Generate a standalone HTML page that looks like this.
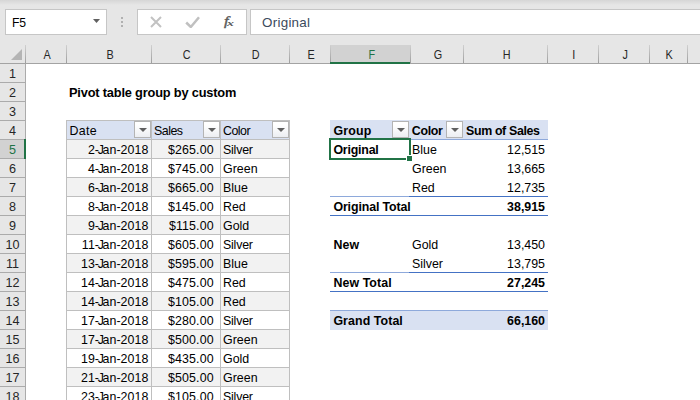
<!DOCTYPE html>
<html lang="en"><head><meta charset="utf-8"><title>Pivot table group by custom</title>
<style>
html,body{margin:0;padding:0}
body{width:700px;height:400px;overflow:hidden;background:#fff;position:relative;font-family:"Liberation Sans",Arial,sans-serif;font-size:12.4px;color:#000}
div,span{position:absolute;box-sizing:border-box;white-space:nowrap}
.top{left:0;top:0;width:700px;height:64px;background:#e6e6e6}
.grad{left:0;top:0;width:700px;height:5px;background:linear-gradient(#d6d6d6,#e6e6e6)}
.box{top:9px;height:26px;background:#fff;border:1px solid #c6c6c6}
.ch{top:46px;height:18px;line-height:19px;text-align:center;color:#262626;font-size:12.6px}
.ch b{font-weight:normal;display:inline-block;transform:scaleX(0.86)}
.sep{top:45px;width:1px;height:18px;background:linear-gradient(#d0d0d0,#9e9e9e)}
.rh{left:0;width:25px;height:18px;line-height:21px;text-align:center;color:#262626;font-size:12.6px;background:#e6e6e6}
.rl{left:0;width:25px;height:1px;background:#ababab}
.c{height:19px;line-height:19px;margin-top:0.5px}
.r{text-align:right}
.j{font-style:normal;position:static;letter-spacing:-1.3px}
.d{letter-spacing:0.05px}
.m{letter-spacing:0.15px}
.b{font-weight:bold}
.fb{width:17px;height:17px;border:1px solid #b4b4b4;background:linear-gradient(#fff 20%,#eceef2)}
.fb i{position:absolute;left:3.5px;top:6px;width:0;height:0;border-left:4px solid transparent;border-right:4px solid transparent;border-top:4px solid #606060}
</style></head><body>

<div class="top"></div><div class="grad"></div>
<div class="box" style="left:5px;width:102px"></div>
<span style="left:12px;top:9px;height:26px;line-height:28px;font-size:12.2px;letter-spacing:-0.3px;color:#000">F5</span>
<svg style="position:absolute;left:93px;top:19px" width="8" height="5"><polygon points="0,0 7,0 3.5,4" fill="#606060"/></svg>
<div style="left:121px;top:17px;width:2px;height:2px;background:#b0b0b0"></div>
<div style="left:121px;top:21px;width:2px;height:2px;background:#b0b0b0"></div>
<div style="left:121px;top:25px;width:2px;height:2px;background:#b0b0b0"></div>
<div class="box" style="left:137px;width:110px"></div>
<svg style="position:absolute;left:150px;top:16px" width="12" height="12"><path d="M1 1 L11 11 M11 1 L1 11" stroke="#c2c2c2" stroke-width="2" fill="none"/></svg>
<svg style="position:absolute;left:185px;top:16px" width="15" height="12"><path d="M1.2 6.5 L5.8 11 L14 1.2" stroke="#c0c0c0" stroke-width="2.5" fill="none"/></svg>
<span style="left:224.2px;top:9px;height:26px;line-height:25px;font-family:'Liberation Serif',serif;font-style:italic;font-size:12.8px;color:#5a5a5a"><i style="display:inline-block;transform:scaleX(1.3);transform-origin:0 50%;-webkit-text-stroke:0.35px #5a5a5a">f</i><span style="position:relative;display:inline-block;font-size:9.2px;font-weight:bold;top:0.7px;left:-0.3px;transform:scaleX(1.5);transform-origin:0 50%">x</span></span>
<div class="box" style="left:250px;width:460px"></div>
<span style="left:262px;top:9px;height:26px;line-height:28px;font-size:13.4px;letter-spacing:0.27px;color:#3b4a5c">Original</span>
<div style="left:0;top:63px;width:700px;height:1px;background:#a3a3a3"></div>
<svg style="position:absolute;left:11px;top:49px" width="11" height="11"><polygon points="0,11 11,11 11,0" fill="#b4b4b4"/></svg>
<div class="sep" style="left:25px"></div>
<div class="ch" style="left:27px;width:40px"><b>A</b></div>
<div class="sep" style="left:66px"></div>
<div class="ch" style="left:68px;width:84px"><b>B</b></div>
<div class="sep" style="left:151px"></div>
<div class="ch" style="left:153px;width:68px"><b>C</b></div>
<div class="sep" style="left:220px"></div>
<div class="ch" style="left:222px;width:68px"><b>D</b></div>
<div class="sep" style="left:289px"></div>
<div class="ch" style="left:291px;width:40px"><b>E</b></div>
<div class="sep" style="left:330px"></div>
<div style="left:331px;top:45px;width:79px;height:17px;background:#d2d2d2"></div>
<div class="ch" style="left:332px;width:79px;color:#217346"><b>F</b></div>
<div class="sep" style="left:410px"></div>
<div class="ch" style="left:412px;width:52px"><b>G</b></div>
<div class="sep" style="left:463px"></div>
<div class="ch" style="left:465px;width:83px"><b>H</b></div>
<div class="sep" style="left:547px"></div>
<div class="ch" style="left:549px;width:50px"><b>I</b></div>
<div class="sep" style="left:598px"></div>
<div class="ch" style="left:600px;width:50px"><b>J</b></div>
<div class="sep" style="left:649px"></div>
<div class="ch" style="left:651px;width:37px"><b>K</b></div>
<div class="sep" style="left:687px"></div>
<div class="ch" style="left:689px;width:32px"><b>L</b></div>
<div style="left:0;top:64px;width:25px;height:336px;background:#e6e6e6"></div>
<div style="left:25px;top:64px;width:1px;height:336px;background:#ababab"></div>
<div class="rh" style="top:64px">1</div>
<div class="rl" style="top:82px"></div>
<div class="rh" style="top:83px">2</div>
<div class="rl" style="top:101px"></div>
<div class="rh" style="top:102px">3</div>
<div class="rl" style="top:120px"></div>
<div class="rh" style="top:121px">4</div>
<div class="rl" style="top:139px"></div>
<div style="left:0;top:140px;width:24px;height:18px;background:#d2d2d2"></div>
<div class="rh" style="top:140px;background:none;color:#217346">5</div>
<div class="rl" style="top:158px"></div>
<div class="rh" style="top:159px">6</div>
<div class="rl" style="top:177px"></div>
<div class="rh" style="top:178px">7</div>
<div class="rl" style="top:196px"></div>
<div class="rh" style="top:197px">8</div>
<div class="rl" style="top:215px"></div>
<div class="rh" style="top:216px">9</div>
<div class="rl" style="top:234px"></div>
<div class="rh" style="top:235px">10</div>
<div class="rl" style="top:253px"></div>
<div class="rh" style="top:254px">11</div>
<div class="rl" style="top:272px"></div>
<div class="rh" style="top:273px">12</div>
<div class="rl" style="top:291px"></div>
<div class="rh" style="top:292px">13</div>
<div class="rl" style="top:310px"></div>
<div class="rh" style="top:311px">14</div>
<div class="rl" style="top:329px"></div>
<div class="rh" style="top:330px">15</div>
<div class="rl" style="top:348px"></div>
<div class="rh" style="top:349px">16</div>
<div class="rl" style="top:367px"></div>
<div class="rh" style="top:368px">17</div>
<div class="rl" style="top:386px"></div>
<div class="rh" style="top:387px">18</div>
<div class="rl" style="top:405px"></div>
<div style="left:330px;top:62px;width:80px;height:2px;background:#217346"></div>
<div style="left:24px;top:139px;width:2px;height:20px;background:#217346"></div>
<span class="c b" style="left:69px;top:83px;font-size:12.8px;letter-spacing:-0.18px;margin-top:0">Pivot table group by custom</span>
<div style="left:66px;top:120px;width:224px;height:20px;background:#d9e1f2"></div>
<div style="left:66px;top:139px;width:224px;height:20px;background:#f2f2f2"></div>
<div style="left:66px;top:177px;width:224px;height:20px;background:#f2f2f2"></div>
<div style="left:66px;top:215px;width:224px;height:20px;background:#f2f2f2"></div>
<div style="left:66px;top:253px;width:224px;height:20px;background:#f2f2f2"></div>
<div style="left:66px;top:291px;width:224px;height:20px;background:#f2f2f2"></div>
<div style="left:66px;top:329px;width:224px;height:20px;background:#f2f2f2"></div>
<div style="left:66px;top:367px;width:224px;height:20px;background:#f2f2f2"></div>
<div style="left:66px;top:120px;width:224px;height:1px;background:#bfbfbf"></div>
<div style="left:66px;top:139px;width:224px;height:1px;background:#bfbfbf"></div>
<div style="left:66px;top:158px;width:224px;height:1px;background:#bfbfbf"></div>
<div style="left:66px;top:177px;width:224px;height:1px;background:#bfbfbf"></div>
<div style="left:66px;top:196px;width:224px;height:1px;background:#bfbfbf"></div>
<div style="left:66px;top:215px;width:224px;height:1px;background:#bfbfbf"></div>
<div style="left:66px;top:234px;width:224px;height:1px;background:#bfbfbf"></div>
<div style="left:66px;top:253px;width:224px;height:1px;background:#bfbfbf"></div>
<div style="left:66px;top:272px;width:224px;height:1px;background:#bfbfbf"></div>
<div style="left:66px;top:291px;width:224px;height:1px;background:#bfbfbf"></div>
<div style="left:66px;top:310px;width:224px;height:1px;background:#bfbfbf"></div>
<div style="left:66px;top:329px;width:224px;height:1px;background:#bfbfbf"></div>
<div style="left:66px;top:348px;width:224px;height:1px;background:#bfbfbf"></div>
<div style="left:66px;top:367px;width:224px;height:1px;background:#bfbfbf"></div>
<div style="left:66px;top:386px;width:224px;height:1px;background:#bfbfbf"></div>
<div style="left:66px;top:120px;width:1px;height:280px;background:#bfbfbf"></div>
<div style="left:151px;top:120px;width:1px;height:280px;background:#bfbfbf"></div>
<div style="left:220px;top:120px;width:1px;height:280px;background:#bfbfbf"></div>
<div style="left:289px;top:120px;width:1px;height:280px;background:#bfbfbf"></div>
<span class="c" style="left:69.5px;top:121px;letter-spacing:0.3px">Date</span>
<span class="c" style="left:154px;top:121px;letter-spacing:-0.5px">Sales</span>
<span class="c" style="left:223px;top:121px;letter-spacing:-0.5px">Color</span>
<div class="fb" style="left:134px;top:121px"><i></i></div>
<div class="fb" style="left:203px;top:121px"><i></i></div>
<div class="fb" style="left:272px;top:121px"><i></i></div>
<span class="c r d" style="left:67px;width:81.4px;top:140px">2<i class="j">-J</i>an-2018</span>
<span class="c r m" style="left:152px;width:61.8px;top:140px">$265.00</span>
<span class="c" style="left:223px;top:140px;letter-spacing:-0.2px">Silver</span>
<span class="c r d" style="left:67px;width:81.4px;top:159px">4<i class="j">-J</i>an-2018</span>
<span class="c r m" style="left:152px;width:61.8px;top:159px">$745.00</span>
<span class="c" style="left:223px;top:159px;letter-spacing:0.05px">Green</span>
<span class="c r d" style="left:67px;width:81.4px;top:178px">6<i class="j">-J</i>an-2018</span>
<span class="c r m" style="left:152px;width:61.8px;top:178px">$665.00</span>
<span class="c" style="left:223px;top:178px;letter-spacing:0px">Blue</span>
<span class="c r d" style="left:67px;width:81.4px;top:197px">8<i class="j">-J</i>an-2018</span>
<span class="c r m" style="left:152px;width:61.8px;top:197px">$145.00</span>
<span class="c" style="left:223px;top:197px;letter-spacing:0px">Red</span>
<span class="c r d" style="left:67px;width:81.4px;top:216px">9<i class="j">-J</i>an-2018</span>
<span class="c r m" style="left:152px;width:61.8px;top:216px">$115.00</span>
<span class="c" style="left:223px;top:216px;letter-spacing:0px">Gold</span>
<span class="c r d" style="left:67px;width:81.4px;top:235px">11<i class="j">-J</i>an-2018</span>
<span class="c r m" style="left:152px;width:61.8px;top:235px">$605.00</span>
<span class="c" style="left:223px;top:235px;letter-spacing:-0.2px">Silver</span>
<span class="c r d" style="left:67px;width:81.4px;top:254px">13<i class="j">-J</i>an-2018</span>
<span class="c r m" style="left:152px;width:61.8px;top:254px">$595.00</span>
<span class="c" style="left:223px;top:254px;letter-spacing:0px">Blue</span>
<span class="c r d" style="left:67px;width:81.4px;top:273px">14<i class="j">-J</i>an-2018</span>
<span class="c r m" style="left:152px;width:61.8px;top:273px">$475.00</span>
<span class="c" style="left:223px;top:273px;letter-spacing:0px">Red</span>
<span class="c r d" style="left:67px;width:81.4px;top:292px">14<i class="j">-J</i>an-2018</span>
<span class="c r m" style="left:152px;width:61.8px;top:292px">$105.00</span>
<span class="c" style="left:223px;top:292px;letter-spacing:0px">Red</span>
<span class="c r d" style="left:67px;width:81.4px;top:311px">17<i class="j">-J</i>an-2018</span>
<span class="c r m" style="left:152px;width:61.8px;top:311px">$280.00</span>
<span class="c" style="left:223px;top:311px;letter-spacing:-0.2px">Silver</span>
<span class="c r d" style="left:67px;width:81.4px;top:330px">17<i class="j">-J</i>an-2018</span>
<span class="c r m" style="left:152px;width:61.8px;top:330px">$500.00</span>
<span class="c" style="left:223px;top:330px;letter-spacing:0.05px">Green</span>
<span class="c r d" style="left:67px;width:81.4px;top:349px">19<i class="j">-J</i>an-2018</span>
<span class="c r m" style="left:152px;width:61.8px;top:349px">$435.00</span>
<span class="c" style="left:223px;top:349px;letter-spacing:0px">Gold</span>
<span class="c r d" style="left:67px;width:81.4px;top:368px">21<i class="j">-J</i>an-2018</span>
<span class="c r m" style="left:152px;width:61.8px;top:368px">$505.00</span>
<span class="c" style="left:223px;top:368px;letter-spacing:0.05px">Green</span>
<span class="c r d" style="left:67px;width:81.4px;top:387px">23<i class="j">-J</i>an-2018</span>
<span class="c r m" style="left:152px;width:61.8px;top:387px">$105.00</span>
<span class="c" style="left:223px;top:387px;letter-spacing:-0.2px">Silver</span>
<div style="left:330px;top:120px;width:218px;height:19px;background:#d9e1f2"></div>
<div style="left:330px;top:139px;width:218px;height:1px;background:#8ea9db"></div>
<span class="c b" style="left:333.4px;top:121px;letter-spacing:0.2px">Group</span>
<span class="c b" style="left:411.8px;top:121px;letter-spacing:-0.3px">Color</span>
<span class="c b" style="left:466px;top:121px;letter-spacing:-0.35px">Sum of Sales</span>
<div class="fb" style="left:392px;top:121px"><i></i></div>
<div class="fb" style="left:446px;top:121px"><i></i></div>
<div style="left:330px;top:310px;width:218px;height:20px;background:#d9e1f2"></div>
<div style="left:330px;top:310px;width:218px;height:1px;background:#8ea9db"></div>
<div style="left:330px;top:196px;width:79px;height:1px;background:#8ea9db"></div>
<div style="left:409px;top:196px;width:139px;height:1px;background:#4472c4"></div>
<div style="left:330px;top:272px;width:79px;height:1px;background:#8ea9db"></div>
<div style="left:409px;top:272px;width:139px;height:1px;background:#4472c4"></div>
<div style="left:330px;top:215px;width:218px;height:1px;background:#4472c4"></div>
<div style="left:330px;top:291px;width:218px;height:1px;background:#4472c4"></div>
<span class="c b" style="left:333.4px;top:140px;letter-spacing:-0.2px">Original</span>
<span class="c" style="left:412px;top:140px">Blue</span>
<span class="c r" style="left:464px;width:81px;top:140px">12,515</span>
<span class="c" style="left:412px;top:159px">Green</span>
<span class="c r" style="left:464px;width:81px;top:159px">13,665</span>
<span class="c" style="left:412px;top:178px">Red</span>
<span class="c r" style="left:464px;width:81px;top:178px">12,735</span>
<span class="c b" style="left:333.4px;top:197px;letter-spacing:-0.12px">Original Total</span>
<span class="c b r" style="left:464px;width:81px;top:197px">38,915</span>
<span class="c b" style="left:333.4px;top:235px;letter-spacing:0.08px">New</span>
<span class="c" style="left:412px;top:235px">Gold</span>
<span class="c r" style="left:464px;width:81px;top:235px">13,450</span>
<span class="c" style="left:412px;top:254px">Silver</span>
<span class="c r" style="left:464px;width:81px;top:254px">13,795</span>
<span class="c b" style="left:333.4px;top:273px;letter-spacing:0.08px">New Total</span>
<span class="c b r" style="left:464px;width:81px;top:273px">27,245</span>
<span class="c b" style="left:333.4px;top:311px;letter-spacing:0.08px">Grand Total</span>
<span class="c b r" style="left:464px;width:81px;top:311px">66,160</span>
<div style="left:329px;top:138px;width:82px;height:22px;border:2px solid #217346"></div>
<div style="left:406px;top:155px;width:7px;height:7px;background:#fff"></div>
<div style="left:407px;top:156px;width:5px;height:5px;background:#217346"></div>
</body></html>
